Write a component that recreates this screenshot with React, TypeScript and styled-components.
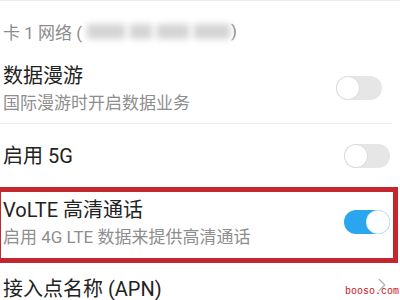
import styled, { createGlobalStyle } from "styled-components"
import { ChevronRight } from "lucide-react"

const GlobalStyle = createGlobalStyle`
  html, body {
    margin: 0;
    padding: 0;
    background: #ffffff;
    font-family: Roboto, "Noto Sans CJK SC", sans-serif;
    overflow: hidden;
  }
`

const Screen = styled.div`
  position: relative;
  width: 400px;
  height: 300px;
  overflow: hidden;
  border-top: 1px solid #ececec;
  box-sizing: border-box;
`

const SectionLabel = styled.div`
  height: 60px;
  display: flex;
  align-items: center;
  padding-left: 3px;
  font-size: 17px;
  color: #8c8c8c;
`

const Masked = styled.span`
  display: inline-flex;
  gap: 5px;
  margin: 0 1px 0 5px;
  filter: blur(3px);
  & i {
    display: block;
    height: 15px;
    background: #d4d4d4;
  }
`

const Row = styled.div<{ $h: number; $pt?: number; $divider?: boolean }>`
  position: relative;
  height: ${(p) => p.$h}px;
  box-sizing: border-box;
  padding: ${(p) => p.$pt ?? 0}px 10px 0 3px;
  display: flex;
  align-items: ${(p) => (p.$pt !== undefined ? "flex-start" : "center")};
  justify-content: space-between;
  border-bottom: ${(p) => (p.$divider ? "1px solid #ebebeb" : "none")};
  margin-right: ${(p) => (p.$divider ? "8px" : "0")};
`

const Highlight = styled.div`
  position: absolute;
  left: -4px;
  right: 2px;
  top: 0;
  bottom: 0;
  border: 5px solid #c3262c;
  pointer-events: none;
`

const Texts = styled.div`
  display: flex;
  flex-direction: column;
`

const Title = styled.div<{ $lh?: number }>`
  font-size: 20px;
  line-height: ${(p) => p.$lh ?? 28}px;
  color: #222222;
  white-space: nowrap;
`

const Subtitle = styled.div`
  font-size: 17px;
  line-height: 27px;
  color: #8e8e8e;
  white-space: nowrap;
`

const Track = styled.div<{ $on?: boolean; $shift?: number }>`
  width: 46px;
  height: 24px;
  border-radius: 12px;
  background: ${(p) => (p.$on ? "#2aa6ee" : "#e6e6e6")};
  position: relative;
  flex-shrink: 0;
  align-self: ${(p) => (p.$shift !== undefined ? "flex-start" : "center")};
  margin-top: ${(p) => p.$shift ?? 0}px;
`

const Knob = styled.div<{ $on?: boolean }>`
  position: absolute;
  top: 1px;
  left: ${(p) => (p.$on ? "23px" : "1px")};
  width: 22px;
  height: 22px;
  border-radius: 50%;
  background: #ffffff;
  box-shadow: 0 0 0 1px ${(p) => (p.$on ? "#d8eefc" : "#dcdcdc")};
`

const Chevron = styled.div`
  color: #b5b5b5;
  display: flex;
  margin-top: -4px;
  margin-right: -3px;
`

const Watermark = styled.div`
  position: absolute;
  right: 1px;
  bottom: 2px;
  font-family: "Liberation Mono", monospace;
  font-size: 10px;
  line-height: 12px;
  color: #d0101a;
`

const Toggle = (props: { on?: boolean; shift?: number }) => (
  <Track $on={props.on} $shift={props.shift}>
    <Knob $on={props.on} />
  </Track>
)

export default function App() {
  return (
    <>
      <GlobalStyle />
      <Screen>
        <SectionLabel>
          卡 1 网络 (
          <Masked>
            <i style={{ width: 38 }} />
            <i style={{ width: 22 }} />
            <i style={{ width: 32 }} />
            <i style={{ width: 36 }} />
          </Masked>
          )
        </SectionLabel>

        <Row $h={63} $pt={1} $divider>
          <Texts>
            <Title>数据漫游</Title>
            <Subtitle>国际漫游时开启数据业务</Subtitle>
          </Texts>
          <Toggle shift={14} />
        </Row>

        <Row $h={63}>
          <Title>启用 5G</Title>
          <Toggle />
        </Row>

        <Row $h={76} $pt={9}>
          <Texts>
            <Title>VoLTE 高清通话</Title>
            <Subtitle>启用 4G LTE 数据来提供高清通话</Subtitle>
          </Texts>
          <Toggle on shift={14} />
          <Highlight />
        </Row>

        <Row $h={37} $pt={15}>
          <Title $lh={22}>接入点名称 (APN)</Title>
          <Chevron>
            <ChevronRight size={22} strokeWidth={1.5} />
          </Chevron>
        </Row>

        <Watermark>booso.com</Watermark>
      </Screen>
    </>
  )
}
